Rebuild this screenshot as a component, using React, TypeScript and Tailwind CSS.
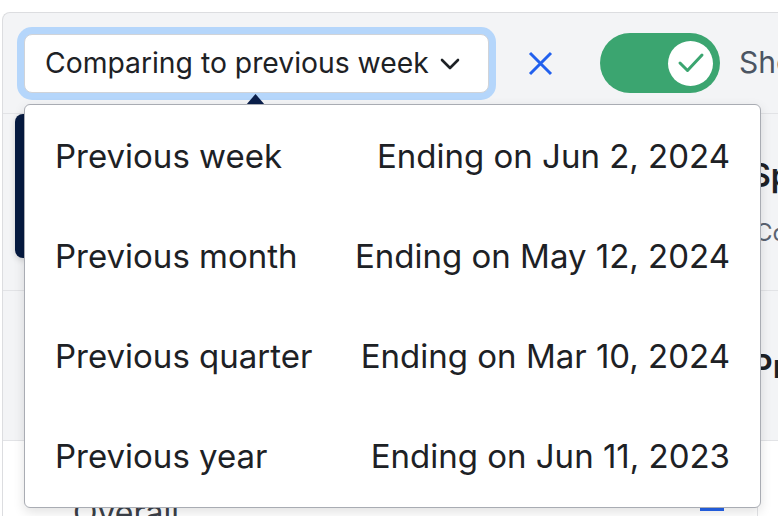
import React from "react";

const rows = [
  { label: "Previous week", date: "Ending on Jun 2, 2024" },
  { label: "Previous month", date: "Ending on May 12, 2024" },
  { label: "Previous quarter", date: "Ending on Mar 10, 2024" },
  { label: "Previous year", date: "Ending on Jun 11, 2023" },
];

export default function App() {
  return (
    <div
      className="relative w-[778px] h-[516px] overflow-hidden bg-white text-[#1d2125]"
      style={{ fontFamily: "Inter, 'Noto Sans', sans-serif" }}
    >
      <div className="mt-[12px] ml-[2px] h-[504px] rounded-tl-[8px] border-l border-t border-[#dcdde0] bg-[#f3f4f6] flex flex-col">
        {/* toolbar */}
        <div className="h-[101px] shrink-0 border-b border-[#e2e3e6] flex items-start">
          <div className="shrink-0 ml-[21px] mt-[21px] w-[465px] h-[59px] rounded-[8px] border border-[#d0d3d8] bg-white shadow-[0_0_0_7px_#b5d6fb] flex items-center pl-[20px] pr-[28px]">
            <span className="text-[28.3px] leading-none whitespace-nowrap">Comparing to previous week</span>
            <svg className="ml-auto shrink-0" width="20" height="12" viewBox="0 0 20 12" fill="none">
              <path d="M2 2 L10 10 L18 2" stroke="#1d2125" strokeWidth="2.6" strokeLinecap="round" strokeLinejoin="round" />
            </svg>
          </div>
          <svg className="shrink-0 ml-[39px] mt-[38px]" width="25" height="25" viewBox="0 0 25 25" fill="none">
            <path d="M2 2 L23 23 M23 2 L2 23" stroke="#2160ee" strokeWidth="3" />
          </svg>
          <div className="shrink-0 ml-[47px] mt-[20px] w-[120px] h-[60px] rounded-full bg-[#3ba570] flex items-center justify-end pr-[7px]">
            <div className="w-[45px] h-[45px] rounded-full bg-white flex items-center justify-center">
              <svg width="28" height="22" viewBox="0 0 28 22" fill="none">
                <path d="M3 11 L10.5 18.5 L25 3" stroke="#3ba570" strokeWidth="3" strokeLinecap="round" strokeLinejoin="round" />
              </svg>
            </div>
          </div>
          <span className="shrink-0 ml-[19px] mt-[34px] text-[30px] leading-none text-[#4b5563] whitespace-nowrap">Show</span>
        </div>
        {/* row 1 */}
        <div className="h-[177px] shrink-0 border-b border-[#e2e3e6] flex items-start">
          <div className="shrink-0 ml-[12px] w-[200px] h-[144px] rounded-[8px] bg-[#061a40] shadow-[0_2px_6px_rgba(0,0,0,0.15)]" />
          <div className="shrink-0 ml-[535px] mt-[46px] flex flex-col whitespace-nowrap">
            <span className="text-[32px] font-semibold leading-none text-[#1d2125]">Spend</span>
            <span className="mt-[29px] ml-[5px] text-[24px] leading-none text-[#5b6370]">Compared</span>
          </div>
        </div>
        {/* row 2 */}
        <div className="h-[150px] shrink-0 border-b border-[#e2e3e6] flex items-start">
          <span className="shrink-0 ml-[749px] mt-[60px] text-[32px] font-semibold leading-none whitespace-nowrap">Previous</span>
        </div>
        {/* row 3 */}
        <div className="flex-1 bg-white flex items-start">
          <span className="shrink-0 ml-[70px] mt-[56px] text-[32px] leading-none text-[#3b4048] whitespace-nowrap">Overall</span>
          <div className="shrink-0 ml-[521px] mt-[64px] w-[24px] h-[6px] bg-[#2563eb]" />
          <div className="shrink-0 ml-[33px] mt-[66px] w-px h-[20px] bg-[#e2e3e6]" />
        </div>
      </div>

      {/* dropdown caret */}
      <svg className="absolute left-[246px] top-[94px]" width="19" height="11" viewBox="0 0 19 11">
        <path d="M9.5 0 L19 11 L0 11 Z" fill="#0b1f4b" />
      </svg>
      {/* dropdown */}
      <div className="absolute left-[24px] top-[104px] w-[737px] h-[404px] rounded-[6px] border-[1.5px] border-[#a9acb3] bg-white shadow-[0_4px_12px_rgba(0,0,0,0.12)] flex flex-col">
        {rows.map((r) => (
          <div key={r.label} className="h-[100px] pt-[3px] flex items-center justify-between pl-[30px] pr-[30px] text-[33px] leading-none whitespace-nowrap text-[#1d2125]">
            <span>{r.label}</span>
            <span>{r.date}</span>
          </div>
        ))}
      </div>
    </div>
  );
}
